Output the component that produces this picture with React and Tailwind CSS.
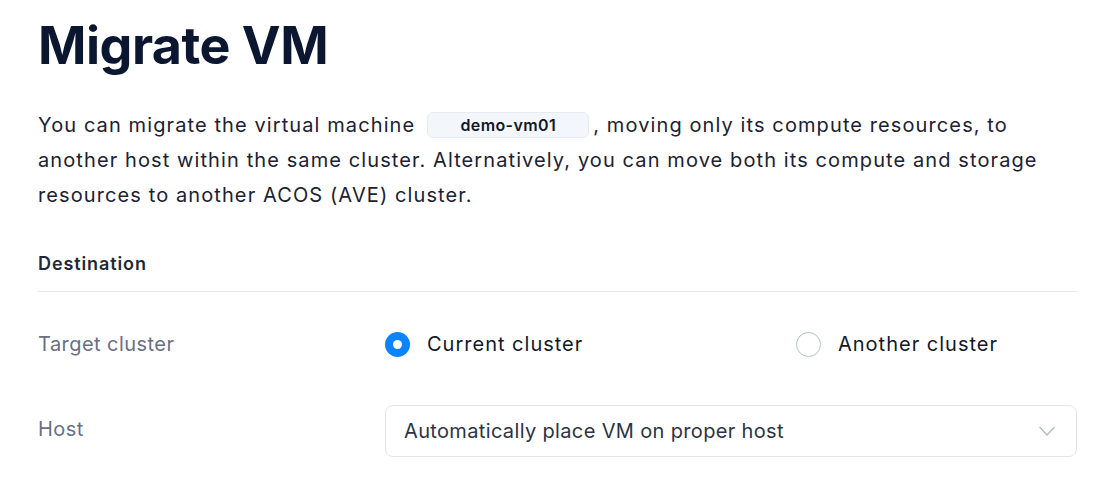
export default function App() {
  return (
    <div className="min-h-screen bg-white font-['Inter',sans-serif] text-[#111827]">
      <div className="px-[38px] pt-[14px] w-[1115px]">
        <h1 className="text-[52px] font-bold leading-[64px] tracking-[-0.5px] text-[#0b1631]">Migrate VM</h1>

        <p className="mt-[30px] text-[20px] leading-[35px] tracking-[1.1px] text-[#1a2233]">
          You can migrate the virtual machine
          <span className="inline-block align-[1px] ml-[12px] mr-[4px] w-[162px] text-center h-[26px] leading-[24px] rounded-[6px] border border-[#e6ebf2] bg-[#f3f6fb] text-[16px] tracking-[0.4px] font-semibold text-[#111827]">
            demo-vm01
          </span>
          , moving only its compute resources, to another host within the same cluster. Alternatively, you can move
          both its compute and storage resources to another ACOS (AVE) cluster.
        </p>

        <div className="mt-[37px] w-[1039px]">
          <div className="pb-[14px] border-b border-[#e5e7eb] text-[18px] font-semibold tracking-[0.9px] text-[#1f2937]">
            Destination
          </div>

          <div className="flex items-center mt-[28px] h-[48px]">
            <div className="w-[347px] text-[20px] tracking-[0.45px] text-[#687083]">Target cluster</div>
            <div className="flex items-center">
              <label className="flex items-center w-[411px]">
                <span className="w-[25px] h-[25px] rounded-full bg-[#0a84ff] flex items-center justify-center">
                  <span className="w-[9px] h-[9px] rounded-full bg-white" />
                </span>
                <span className="ml-[17px] text-[20px] tracking-[1px] text-[#111827]">Current cluster</span>
              </label>
              <label className="flex items-center">
                <span className="w-[25px] h-[25px] rounded-full border border-[#b6bfcf] bg-white" />
                <span className="ml-[17px] text-[20px] tracking-[1px] text-[#111827]">Another cluster</span>
              </label>
            </div>
          </div>

          <div className="flex items-center mt-[37px]">
            <div className="w-[347px] text-[20px] tracking-[0.45px] text-[#687083] -mt-[4px]">Host</div>
            <div className="flex-1 flex items-center justify-between h-[52px] px-[18px] rounded-[8px] border border-[#e2e5ea] bg-white">
              <span className="text-[20px] tracking-[0.35px] text-[#2a3447]">Automatically place VM on proper host</span>
              <svg width="18" height="12" viewBox="0 0 18 12" fill="none" className="mr-[2px]">
                <path d="M1.5 2L9 10L16.5 2" stroke="#b4bac4" strokeWidth="1.3" />
              </svg>
            </div>
          </div>
        </div>
      </div>
    </div>
  );
}
